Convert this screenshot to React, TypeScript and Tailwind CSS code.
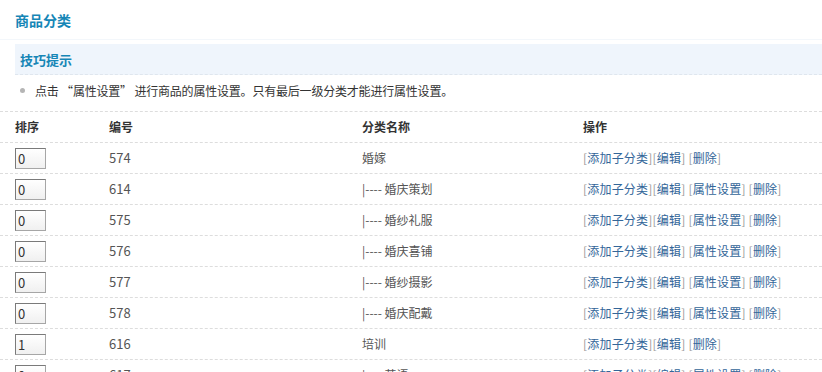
import React from "react";

type Row = { sort: string; id: string; name: string; child: boolean };

const rows: Row[] = [
  { sort: "0", id: "574", name: "婚嫁", child: false },
  { sort: "0", id: "614", name: "|---- 婚庆策划", child: true },
  { sort: "0", id: "575", name: "|---- 婚纱礼服", child: true },
  { sort: "0", id: "576", name: "|---- 婚庆喜铺", child: true },
  { sort: "0", id: "577", name: "|---- 婚纱摄影", child: true },
  { sort: "0", id: "578", name: "|---- 婚庆配戴", child: true },
  { sort: "1", id: "616", name: "培训", child: false },
  { sort: "0", id: "617", name: "|---- 英语", child: true },
];

const font = { fontFamily: '"Noto Sans CJK SC", "Noto Sans", sans-serif' };

function Link({ children }: { children: React.ReactNode }) {
  return (
    <span className="text-[#999]">
      [<span className="text-[#336699]">{children}</span>]
    </span>
  );
}

export default function App() {
  return (
    <div className="w-[822px] h-[372px] overflow-hidden bg-white text-[12px] text-[#333]" style={font}>
      <div className="h-[40px] pl-[15px] flex items-center border-b border-[#f3f7fb]">
        <span className="text-[14px] font-bold text-[#1686b6] leading-none">商品分类</span>
      </div>
      <div className="pl-[15px] mt-[4px]">
        <div className="h-[31px] bg-[#eff5fc] border-b border-dashed border-[#dfe6ee] flex items-center pl-[5px]">
          <span className="text-[13px] font-bold text-[#1686b6] leading-none">技巧提示</span>
        </div>
      </div>
      <div className="h-[31px] pl-[20px] flex items-center">
        <span className="w-[5px] h-[5px] rounded-full bg-[#b5b5b5] mr-[10px]" />
        <span className="text-[#333] tracking-[-0.2px]">点击 “属性设置” 进行商品的属性设置。只有最后一级分类才能进行属性设置。</span>
      </div>
      <div className="mt-[5px]">
        <div className="h-[32px] grid grid-cols-[109px_253px_221px_1fr] items-center border-t border-b border-dashed border-[#dddddd] font-bold text-[#333]">
          <div className="pl-[15px]">排序</div>
          <div>编号</div>
          <div>分类名称</div>
          <div>操作</div>
        </div>
        {rows.map((r, i) => (
          <div
            key={i}
            className="h-[31px] grid grid-cols-[109px_253px_221px_1fr] items-center border-b border-dashed border-[#dddddd]"
          >
            <div className="pl-[15px]">
              <div className="w-[31px] h-[21px] border border-[#a6a6a6] border-t-[#7a7a7a] border-l-[#7a7a7a] bg-gradient-to-b from-white to-[#f0f0f0] text-[13px] text-[#333] leading-[19px] pl-[2px]">
                {r.sort}
              </div>
            </div>
            <div className="text-[#555] text-[13px]">{r.id}</div>
            <div className="text-[#555]">{r.name}</div>
            <div className="whitespace-nowrap tracking-[0.2px]">
              <Link>添加子分类</Link>
              <Link>编辑</Link> {r.child && (<><Link>属性设置</Link> </>)}
              <Link>删除</Link>
            </div>
          </div>
        ))}
      </div>
    </div>
  );
}
